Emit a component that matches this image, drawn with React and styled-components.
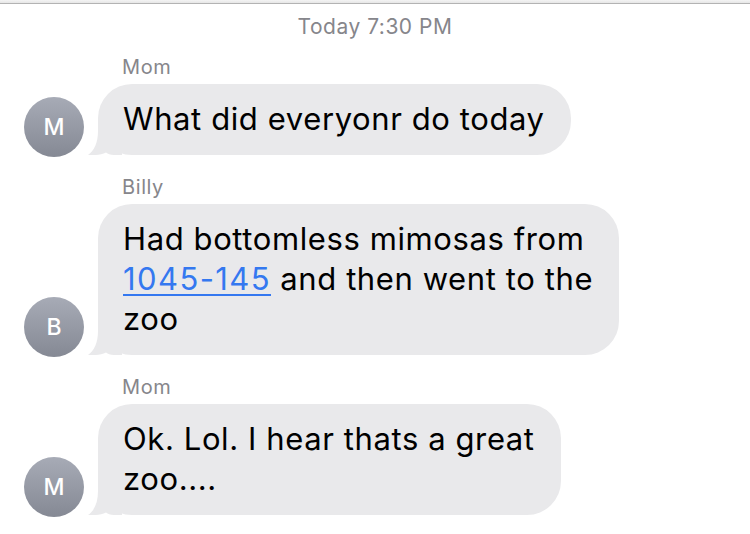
import React from "react";
import styled, { createGlobalStyle } from "styled-components";

const GlobalStyle = createGlobalStyle`
  html, body {
    margin: 0;
    padding: 0;
    background: #ffffff;
  }
  body {
    font-family: "Inter", "Liberation Sans", sans-serif;
    -webkit-font-smoothing: antialiased;
  }
`;

const Screen = styled.div`
  width: 750px;
  height: 534px;
  overflow: hidden;
  background: #ffffff;
  display: flex;
  flex-direction: column;
`;

const TopEdge = styled.div`
  height: 3px;
  background: linear-gradient(#f4f4f4, #e6e6e6);
  border-bottom: 1px solid #b3b3b3;
  flex-shrink: 0;
`;

const Timestamp = styled.div`
  margin-top: 11px;
  text-align: center;
  font-size: 21px;
  line-height: 24px;
  font-weight: 400;
  letter-spacing: 0.5px;
  color: #86868b;
`;

const Thread = styled.div`
  display: flex;
  flex-direction: column;
  gap: 21px;
  padding: 17px 0 0 24px;
`;

const Group = styled.div`
  display: flex;
  flex-direction: column;
`;

const Sender = styled.div`
  margin: 0 0 6px 98px;
  font-size: 20px;
  line-height: 22px;
  letter-spacing: 0.6px;
  color: #86868b;
`;

const Row = styled.div`
  display: flex;
  align-items: flex-end;
  gap: 14px;
`;

const Avatar = styled.div`
  width: 60px;
  height: 60px;
  margin-bottom: -2px;
  border-radius: 50%;
  flex-shrink: 0;
  background: linear-gradient(#a7abb6, #858994);
  color: #ffffff;
  font-size: 23px;
  font-weight: 500;
  display: flex;
  align-items: center;
  justify-content: center;
`;

const Bubble = styled.div`
  position: relative;
  background: #e9e9eb;
  border-radius: 34px;
  padding: 15px 26px 16px 25px;
  font-size: 31px;
  line-height: 40px;
  color: #000000;
  white-space: nowrap;
  letter-spacing: 0.6px;
`;

const TailSvg = styled.svg`
  position: absolute;
  left: -10px;
  bottom: 0;
  width: 34px;
  height: 34px;
  display: block;
`;

const Link = styled.span`
  color: #3478f0;
  letter-spacing: 1.4px;
  text-decoration: underline;
  text-decoration-thickness: 2px;
  text-underline-offset: 4px;
`;

const Tail = () => (
  <TailSvg viewBox="0 0 34 34" aria-hidden="true">
    <path
      d="M10 0 H34 V34 H26 C22 34 20 33 18 31.5 C13 34 6 34.4 0 34 C6 30 10 22 10 10 Z"
      fill="#e9e9eb"
    />
  </TailSvg>
);

const messages = [
  {
    sender: "Mom",
    initial: "M",
    lines: ["What did everyonr do today"],
  },
  {
    sender: "Billy",
    initial: "B",
    lines: [
      "Had bottomless mimosas from",
      <>
        <Link>1045-145</Link> and then went to the
      </>,
      "zoo",
    ],
  },
  {
    sender: "Mom",
    initial: "M",
    lines: ["Ok. Lol. I hear thats a great", "zoo...."],
  },
];

export default function App() {
  return (
    <>
      <GlobalStyle />
      <Screen>
        <TopEdge />
        <Timestamp>Today 7:30 PM</Timestamp>
        <Thread>
          {messages.map((m, i) => (
            <Group key={i}>
              <Sender>{m.sender}</Sender>
              <Row>
                <Avatar>{m.initial}</Avatar>
                <Bubble>
                  <Tail />
                  {m.lines.map((line, j) => (
                    <div key={j}>{line}</div>
                  ))}
                </Bubble>
              </Row>
            </Group>
          ))}
        </Thread>
      </Screen>
    </>
  );
}
